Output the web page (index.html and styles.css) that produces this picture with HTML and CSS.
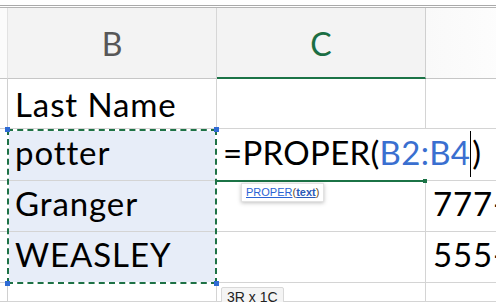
FILE: index.html
```html
<!DOCTYPE html>
<html>
<head>
  <title>Sheet</title>
  <link rel="stylesheet" href="styles.css">
</head>
<body>
  <div class="chrome"></div>
  <div class="sheet">
    <!-- column headers -->
    <div class="hd corner"></div>
    <div class="hd">B</div>
    <div class="hd active">C</div>
    <div class="hd last"></div>

    <!-- row 1 -->
    <div class="rh"></div>
    <div class="cell first">Last Name</div>
    <div class="cell"></div>
    <div class="cell last"></div>

    <!-- row 2 -->
    <div class="rh"></div>
    <div class="cell sel">potter</div>
    <div class="cell editing"><span class="formula">=PROPER(<span class="ref">B2:B4</span><span class="caret"></span>)</span></div>
    <div class="cell last"></div>

    <!-- row 3 -->
    <div class="rh"></div>
    <div class="cell sel">Granger</div>
    <div class="cell"></div>
    <div class="cell last">777-</div>

    <!-- row 4 -->
    <div class="rh"></div>
    <div class="cell sel">WEASLEY</div>
    <div class="cell"></div>
    <div class="cell last">555-</div>

    <!-- row 5 -->
    <div class="rh"></div>
    <div class="cell"></div>
    <div class="cell"></div>
    <div class="cell last"></div>

    <!-- overlays -->
    <div class="ants-bg"></div>
    <div class="ants"></div>
    <div class="handle h-tl"></div>
    <div class="handle h-tr"></div>
    <div class="handle h-bl"></div>
    <div class="handle h-br"></div>
    <div class="active-line"></div>
    <div class="active-handle"></div>

    <div class="tip-fn"><span class="fn">PROPER</span><span class="par">(</span><span class="arg">text</span><span class="par">)</span></div>
    <div class="tip-size">3R x 1C</div>
  </div>
</body>
</html>
```

FILE: styles.css
```css
html, body {
  height: 302px;
  overflow: hidden;
}
body {
  margin: 0;
  background: #fff;
  font-family: Lato, "Open Sans", sans-serif;
}
.chrome {
  height: 1px;
  margin-top: 5px;
  border-top: 1px solid #a9a9a9;
  border-bottom: 1px solid #b4b4b4;
}
.sheet {
  position: relative;
  display: grid;
  grid-template-columns: 8px 209px 209px 1fr;
  grid-template-rows: 71px 50px 52px 51px 51px 19px;
}
.sheet > div {
  box-sizing: border-box;
}
.hd {
  background: #f3f3f3;
  border-right: 1px solid #d6d6d6;
  border-bottom: 1px solid #c6c6c6;
  color: #575757;
  font-size: 32px;
  line-height: 1;
  display: flex;
  align-items: center;
  justify-content: center;
  padding-top: 2px;
}
.hd.corner {
  background: #fbfbfb;
  border-right: 1px solid #e2e2e2;
}
.hd.active {
  color: #1b6e43;
  border-right: 1px solid #cfcfcf;
  border-bottom: 2px solid #1b7346;
  padding-top: 3px;
}
.hd.last {
  background: linear-gradient(90deg, #f9f9f9, #fdfdfd);
  border-right: none;
}
.rh {
  border-right: 1px solid #d0d0d0;
  border-bottom: 1px solid #d0d0d0;
  background: #fff;
}
.cell {
  border-right: 1px solid #d4d4d4;
  border-bottom: 1px solid #d4d4d4;
  color: #000;
  font-size: 33px;
  letter-spacing: 0.9px;
  line-height: 1;
  display: flex;
  align-items: flex-end;
  padding: 0 0 11px 7px;
  white-space: nowrap;
}
.cell.first {
  padding-bottom: 7px;
}
.cell.last {
  border-right: none;
}
.cell.sel {
  background: #e7edf8;
}
.cell.editing {
  border-right: none;
  position: relative;
  z-index: 2;
  overflow: visible;
  padding-left: 6px;
  letter-spacing: 0.3px;
}
.formula {
  background: #fff;
  display: inline-flex;
  align-items: flex-end;
}
.ref {
  color: #3a6fd0;
}
.caret {
  display: inline-block;
  width: 1px;
  height: 46px;
  background: #000;
  margin: 0 1px -8px 0;
}
.ants-bg,
.ants {
  position: absolute;
  left: 7px;
  top: 121px;
  width: 210px;
  height: 155px;
  box-sizing: border-box;
  z-index: 3;
}
.ants-bg {
  border: 2px solid #fff;
}
.ants {
  border: 2px dashed #1e7246;
}
.handle {
  position: absolute;
  width: 5px;
  height: 5px;
  background: #2f6bd4;
  z-index: 4;
}
.h-tl { left: 5px; top: 119px; }
.h-tr { left: 214px; top: 119px; }
.h-bl { left: 5px; top: 273px; }
.h-br { left: 214px; top: 273px; }
.active-line {
  position: absolute;
  left: 217px;
  top: 172px;
  width: 207px;
  height: 2px;
  background: #1b7346;
  z-index: 3;
}
.active-handle {
  position: absolute;
  left: 423px;
  top: 171px;
  width: 4px;
  height: 4px;
  background: #1b7346;
  z-index: 3;
}
.tip-fn {
  position: absolute;
  left: 241px;
  top: 175px;
  height: 19px;
  padding: 0 4px;
  background: #fff;
  box-shadow: 0 1px 4px rgba(0, 0, 0, 0.25);
  border: 1px solid #e2e2e2;
  box-sizing: border-box;
  font-family: "Liberation Sans", Arial, sans-serif;
  font-size: 11px;
  line-height: 17px;
  z-index: 5;
}
.tip-fn .fn {
  color: #2a63d4;
  text-decoration: underline;
}
.tip-fn .arg {
  color: #2a5ab8;
  font-weight: bold;
  text-decoration: underline;
}
.tip-fn .par {
  color: #6b4a1e;
}
.tip-size {
  position: absolute;
  left: 221px;
  top: 279px;
  height: 22px;
  padding: 0 5px;
  background: #f4f4f4;
  border: 1px solid #d8d8d8;
  border-radius: 2px;
  box-sizing: border-box;
  font-family: "Liberation Sans", Arial, sans-serif;
  font-size: 14px;
  line-height: 19px;
  color: #222;
  z-index: 5;
}
```
